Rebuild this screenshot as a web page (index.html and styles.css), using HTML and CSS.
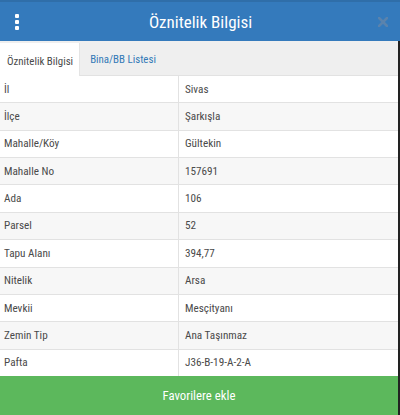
FILE: index.html
```html
<!DOCTYPE html>
<html lang="tr">
<head>
<meta charset="utf-8">
<link rel="stylesheet" href="styles.css">
</head>
<body>
<div class="panel">
  <header class="header">
    <span class="menu"><i></i><i></i><i></i></span>
    <h1 class="title">Öznitelik Bilgisi</h1>
    <svg class="close" width="10" height="10" viewBox="0 0 10 10" aria-label="Kapat"><path d="M1 1 L9 9 M9 1 L1 9" stroke="#5a83ad" stroke-width="2.6" stroke-linecap="square"/></svg>
  </header>
  <div class="body">
    <nav class="tabs">
      <span class="tab active">Öznitelik Bilgisi</span>
      <span class="tab link">Bina/BB Listesi</span>
    </nav>
    <div class="table">
      <div class="row"><div class="key">İl</div><div class="val">Sivas</div></div>
      <div class="row"><div class="key">İlçe</div><div class="val">Şarkışla</div></div>
      <div class="row"><div class="key">Mahalle/Köy</div><div class="val">Gültekin</div></div>
      <div class="row"><div class="key">Mahalle No</div><div class="val">157691</div></div>
      <div class="row"><div class="key">Ada</div><div class="val">106</div></div>
      <div class="row"><div class="key">Parsel</div><div class="val">52</div></div>
      <div class="row"><div class="key">Tapu Alanı</div><div class="val">394,77</div></div>
      <div class="row"><div class="key">Nitelik</div><div class="val">Arsa</div></div>
      <div class="row"><div class="key">Mevkii</div><div class="val">Mesçityanı</div></div>
      <div class="row"><div class="key">Zemin Tip</div><div class="val">Ana Taşınmaz</div></div>
      <div class="row"><div class="key">Pafta</div><div class="val">J36-B-19-A-2-A</div></div>
    </div>
    <button class="fav">Favorilere ekle</button>
  </div>
</div>
</body>
</html>
```
FILE: styles.css
```css
* { box-sizing: border-box; }
html, body { margin: 0; padding: 0; }
body {
  font-family: "Roboto Condensed", "Liberation Sans", Arial, sans-serif;
  color: #333;
  background: #fff;
}
.panel {
  width: 400px;
  height: 415px;
  display: flex;
  flex-direction: column;
}
.header {
  height: 41px;
  flex: none;
  background: #347abc;
  border-top: 2px solid #2f6ea9;
  display: flex;
  align-items: center;
  padding: 0 12px 0 14px;
}
.menu {
  width: 5px;
  display: flex;
  flex-direction: column;
  gap: 2px;
  align-items: center;
}
.menu i {
  display: block;
  width: 4px;
  height: 4px;
  background: #fff;
  border-radius: 1px;
}
.title {
  flex: 1;
  margin: 0;
  text-align: center;
  font-size: 17px;
  font-weight: normal;
  color: #fff;
  padding-left: 4px;
}
.close {
  flex: none;
  display: block;
}
.body {
  flex: 1;
  display: flex;
  flex-direction: column;
  border-right: 2px solid #222;
  min-height: 0;
}
.tabs {
  height: 35px;
  flex: none;
  background: #efefef;
  display: flex;
  align-items: stretch;
  border-bottom: 1px solid #e2e2e2;
}
.tab {
  display: flex;
  align-items: center;
  font-size: 10.9px;
  padding: 3px 6px 0 7px;
}
.tab.active {
  background: #fff;
  color: #4a4a4a;
  margin-top: 2px;
  margin-bottom: -1px;
  border-right: 1px solid #e4e4e4;
}
.tab.link {
  color: #337ab7;
  padding-left: 10px;
}
.table {
  flex: 1;
  display: flex;
  flex-direction: column;
}
.row {
  flex: 1;
  display: flex;
  border-top: 1px solid #e2e2e2;
  font-size: 11.2px;
  color: #4a4a4a;
}
.row:first-child { border-top: none; }
.row:nth-child(even) { background: #f7f7f7; }
.key {
  width: 179px;
  flex: none;
  display: flex;
  align-items: center;
  padding-left: 4px;
  border-right: 1px solid #e2e2e2;
}
.val {
  flex: 1;
  display: flex;
  align-items: center;
  padding-left: 6px;
}
.fav {
  height: 39px;
  flex: none;
  border: none;
  margin: 0;
  background: #5cb85c;
  color: #fff;
  font-family: "Roboto Condensed", "Liberation Sans", Arial, sans-serif;
  font-size: 12.8px;
  width: 100%;
}
```
